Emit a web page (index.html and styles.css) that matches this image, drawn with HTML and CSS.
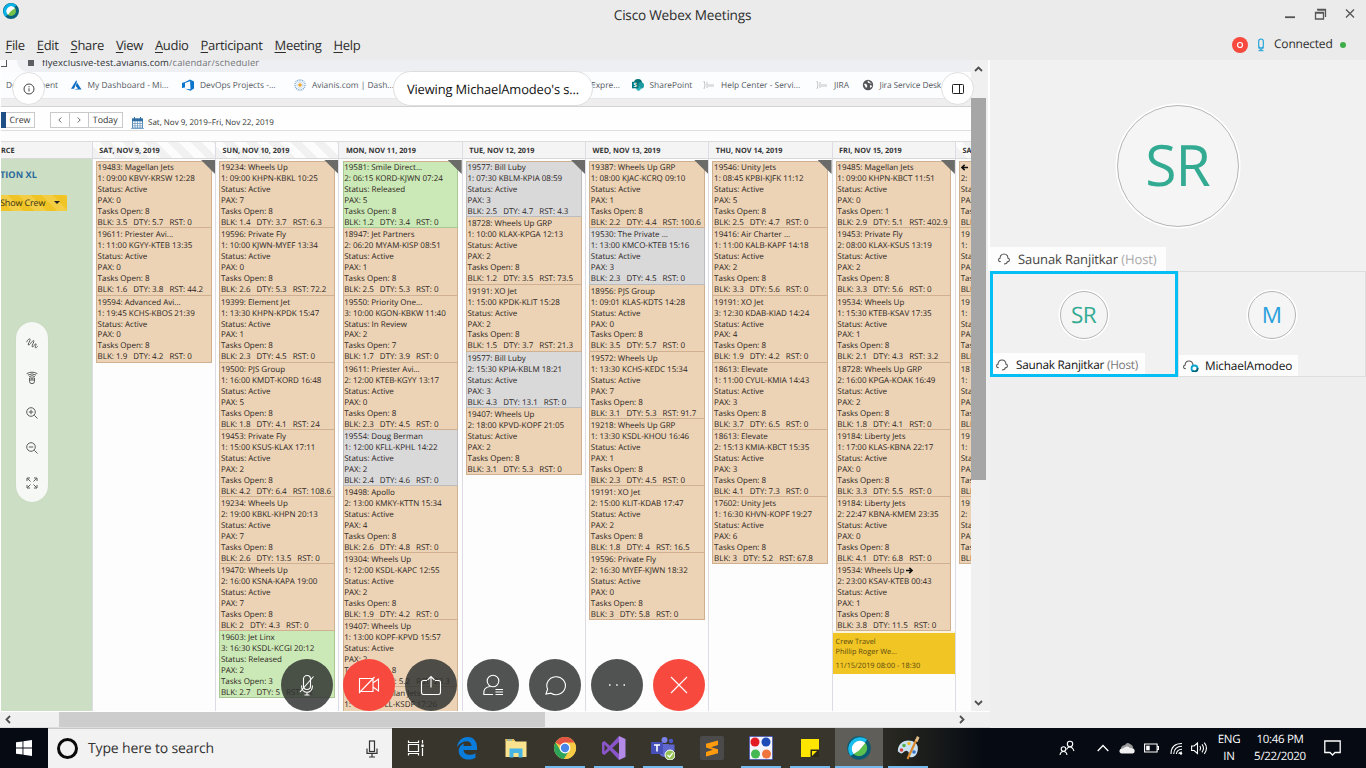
FILE: index.html
```html
<!DOCTYPE html>
<html lang="en">
<head>
<meta charset="utf-8">
<title>Cisco Webex Meetings</title>
<link rel="stylesheet" href="styles.css">
</head>
<body>
<div class="app">
  <header class="titlebar">
    <svg class="brand" viewBox="0 0 16 16"><circle cx="8" cy="8" r="6.4" fill="#fff"/><path d="M8 8 13 4.500A6.200 6.200 0 0 1 4 13z" fill="#73c04b"/><circle cx="8" cy="8" r="6.500" fill="none" stroke="#07627f" stroke-width="3"/><path d="M3.500 12.700A6.500 6.500 0 0 1 12.300 3.200" fill="none" stroke="#07b5ea" stroke-width="3"/></svg>
    <div class="title">Cisco Webex Meetings</div>
    <nav class="menu"><span><u>F</u>ile</span><span><u>E</u>dit</span><span><u>S</u>hare</span><span><u>V</u>iew</span><span><u>A</u>udio</span><span><u>P</u>articipant</span><span><u>M</u>eeting</span><span><u>H</u>elp</span></nav>
    <svg class="winctl" viewBox="0 0 76 16"><g fill="none" stroke="#555" stroke-width="1.300"><path d="M0 12.200h10" stroke-width="1.800"/><path d="M30.500 7.500h8v6.500h-8zM30 8h9M32.500 5h8v7M32 4.500h9" /><path d="M61 4.500l8 8M69 4.500l-8 8"/></g></svg>
    <div class="status">
      <svg width="16" height="16" viewBox="0 0 16 16"><circle cx="8" cy="8" r="8" fill="#f8493f"/><circle cx="8" cy="8" r="2.500" fill="none" stroke="#fff" stroke-width="1.200"/></svg>
      <svg width="8" height="14" viewBox="0 0 8 14"><rect x="1.700" y="1" width="4.600" height="9" rx="2.300" fill="none" stroke="#1ba0d8" stroke-width="1.100"/><path d="M1 9.500q3 3.200 6 0M4 11v2M1.500 12.700h5" fill="none" stroke="#1ba0d8"/></svg>
      <span>Connected</span><i class="dot"></i>
    </div>
  </header>

  <main class="main">
    <section class="share">
      <div class="screen">
        <div class="urlbar"><span class="reload"></span><div class="urlfield"><i class="lock"></i><span class="url">flyexclusive-test.avianis.com<em>/calendar/scheduler</em></span></div></div>
        <div class="bookmarks">
          <span class="bm b0">Development</span>
          <span class="bm b1"><svg viewBox="0 0 12 11"><path d="M6.300.8 1 9.300h3L7 2zM7 3l-1.300 3.500L8 9 4 10h7.500z" fill="#0c6cc4"/></svg>My Dashboard - Mi...</span>
          <span class="bm b2"><svg viewBox="0 0 12 12"><path d="M0 4 3 3 8 .5v1.700L3 4v4.500L0 9zM8 .5l4 2v7L8.500 11.700 3 9.700l5.500.5z" fill="#0c76cf"/></svg>DevOps Projects -...</span>
          <span class="bm b3"><svg viewBox="0 0 12 12"><circle cx="6" cy="6" r="5" fill="none" stroke="#7da8cf" stroke-width="1.500" stroke-dasharray="1 .8"/><circle cx="6" cy="6" r="3" fill="none" stroke="#8fb9dc" stroke-dasharray=".8 .8"/><circle cx="6" cy="6" r="1.800" fill="#eda52c"/></svg>Avianis.com | Dash...</span>
          <span class="bm b4">Expre...</span>
          <span class="bm b5"><svg viewBox="0 0 12 12"><circle cx="6" cy="4" r="4" fill="#067277"/><circle cx="8.700" cy="6.500" r="3.300" fill="#1a9ba1"/><circle cx="6.500" cy="9.500" r="2.300" fill="#2fb5bd"/><rect y="2.800" width="6.500" height="6.500" fill="#03787c"/><text x="1.500" y="8.200" font-size="6" font-weight="700" fill="#fff" font-family="Open Sans">S</text></svg>SharePoint</span>
          <span class="bm b6"><svg viewBox="0 0 12 12"><path d="M1 2q2 4 0 8M4 3v6M6 5v3M8 5v3M10 5v3" stroke="#c3c3c3" fill="none"/></svg>Help Center - Servi...</span>
          <span class="bm b7"><svg viewBox="0 0 12 12"><path d="M1 2q2 4 0 8M4 3v6M6 5v3M8 5v3M10 5v3" stroke="#c3c3c3" fill="none"/></svg>JIRA</span>
          <span class="bm b8"><svg viewBox="0 0 12 12"><circle cx="6" cy="6" r="5.200" fill="#55585b"/><path d="M2 5q2-1 3 1t-1 3M6 1.500q-1 2 1 2.500t3 1M8 6l2.500 1L8 9z" fill="#fff"/></svg>Jira Service Desk</span>
        </div>
        <div class="strip"></div>
        <div class="tools"><span class="tab"></span><span class="btn crew">Crew</span><span class="btn prev"><svg viewBox="0 0 4 6"><path d="M3.300.5.8 3l2.500 2.500"/></svg></span><span class="btn next"><svg viewBox="0 0 4 6"><path d="M.7.5 3.200 3 .7 5.500"/></svg></span><span class="btn today">Today</span>
          <svg class="cal" viewBox="0 0 13 12"><path d="M1.500 2h10v9h-10z" fill="#fff" stroke="#5b8fba"/><path d="M1 1.500h11v2.800H1z" fill="#2f6ea5"/><path d="M3.500 0v3M9.500 0v3" stroke="#2f6ea5"/><path d="M1 6.500h11M1 8.800h11M4 4v7M6.500 4v7M9 4v7M0 11.500h13" stroke="#5b8fba" stroke-width=".7"/></svg>
          <span class="range">Sat, Nov 9, 2019–Fri, Nov 22, 2019</span></div>
        <div class="spacer"></div>
        <div class="board">
          <div class="resource"><div class="dayhead">RCE</div><div class="fleet"><b>TION XL</b><span class="showcrew">Show Crew<i></i></span></div></div>
          <div class="days" id="days"></div>
        </div>
        <div class="pill">Viewing MichaelAmodeo's s...</div>
        <div class="round info"><svg width="12" height="12" viewBox="0 0 12 12" fill="none" stroke="#444"><circle cx="6" cy="6" r="5"/><path d="M6 5.300v3.200M6 3.200v1.100"/></svg></div>
        <div class="sidepill">
          <svg viewBox="0 0 12 12"><path d="M.6 5.200C1.300 3 3.600 1 4.100 2.200 4.600 3.600 1.300 7.400 2.400 8 3.700 8.600 6.400 3 7.700 3.600 8.900 4.300 5 9.300 6.300 9.900 7.500 10.400 9 6.300 10 6.800 10.900 7.400 8.500 10 9.300 10.700 10 11.200 11 10.200 11.600 9.400"/></svg>
          <svg viewBox="0 0 12 12"><path d="M3.500 6h5v3.200a2.500 2.500 0 0 1-5 0zM3.500 8h5M6 6v2M3.200 4.600Q6 2.800 8.800 4.600M1.900 3.100Q6 .6 10.100 3.100M.6 1.700Q6-1.400 11.400 1.700"/></svg>
          <svg viewBox="0 0 12 12"><path d="M8.300 8.300 11.500 11.500M5 2.800v4.400M2.800 5h4.400"/><circle cx="5" cy="5" r="4.300"/></svg>
          <svg viewBox="0 0 12 12"><path d="M8.300 8.300 11.500 11.500M2.800 5h4.400"/><circle cx="5" cy="5" r="4.300"/></svg>
          <svg viewBox="0 0 12 12"><path d="M1 4V1h3M8 1h3v3M11 8v3H8M4 11H1V8M1.500 1.500l3 3M10.500 1.500l-3 3M10.500 10.500l-3-3M1.500 10.500l3-3"/></svg>
        </div>
        <div class="controls">
          <span class="ctl"><svg viewBox="0 0 24 24"><rect x="8.500" y="2.500" width="7" height="14" rx="3.500"/><path d="M6.500 12.500c0 9 11 9 11 0M12 19.500V22M9.500 22h5M5 19 18.500 3.500"/></svg></span>
          <span class="ctl red"><svg viewBox="0 0 24 24"><path d="M2.500 5.500h13.500v13H2.500zM16 10l5.500-4v12L16 14M2 20 17.500 4"/></svg></span>
          <span class="ctl"><svg viewBox="0 0 24 24"><path d="M8 7.500H4.500q-2 0-2 2V19q0 2.500 2 2.500h15q2 0 2-2.500V9.500q0-2-2-2H16M12 14.500V3.500M8.500 7 12 3.500 15.500 7"/></svg></span>
          <span class="ctl"><svg viewBox="0 0 24 24"><circle cx="12" cy="8" r="5.800"/><path d="M12 21.500H2.800q-1-7 6-8M14.500 16.500h7.500M14.500 19h7.500M14.500 21.500h7.500"/></svg></span>
          <span class="ctl"><svg viewBox="0 0 24 24"><path d="M3 21l1.600-4.700A9.300 9 0 1 1 8 20.200z"/></svg></span>
          <span class="ctl"><svg viewBox="0 0 24 24"><path d="M4 12h1.500M11.200 12h1.500M18.500 12H20" stroke-width="1.500"/></svg></span>
          <span class="ctl red"><svg viewBox="0 0 24 24"><path d="M4 4l16 16M20 4 4 20"/></svg></span>
        </div>
      </div>
      <div class="vscroll"><svg viewBox="0 0 9 6"><path d="M1 5l3.500-3.500L8 5"/></svg><i></i><svg class="end" viewBox="0 0 9 6"><path d="M1 1l3.500 3.500L8 1"/></svg></div>
      <div class="hscroll"><svg viewBox="0 0 6 9"><path d="M5 1 1.500 4.500 5 8"/></svg><i></i><svg class="end" viewBox="0 0 6 9"><path d="M1 1l3.500 3.500L1 8"/></svg></div>
      <div class="round layout"><svg width="12" height="10" viewBox="0 0 12 10" fill="none" stroke="#222"><rect x=".5" y=".5" width="11" height="9" rx=".8"/><path d="M7.500.5v9"/></svg></div>
    </section>
    <aside class="people">
      <div class="speaker"><div class="avatar big">SR</div><div class="name lg"><svg viewBox="0 0 12 12"><path d="M2.700 8.500Q.7 9 .6 7 .5 5.300 2 5.200 2.300 1 6 1T10 5.200q1.500.1 1.400 1.800-.1 2-2.100 1.500M9.300 8.500q0 2.500-3.300 2.500"/></svg><span>Saunak Ranjitkar <em>(Host)</em></span></div></div>
      <div class="thumbs">
        <div class="thumb active"><div class="avatar">SR</div><div class="name"><svg viewBox="0 0 12 12"><path d="M2.700 8.500Q.7 9 .6 7 .5 5.300 2 5.200 2.300 1 6 1T10 5.200q1.500.1 1.400 1.800-.1 2-2.100 1.500M9.300 8.500q0 2.500-3.300 2.500"/></svg><span>Saunak Ranjitkar <em>(Host)</em></span></div></div>
        <div class="thumb"><div class="avatar blue">M</div><div class="name"><svg class="wide" viewBox="0 0 16 12"><path d="M2.700 8.500Q.7 9 .6 7 .5 5.300 2 5.200 2.300 1 6 1T10 5.200"/><circle cx="11.500" cy="8.500" r="3" fill="#fff" style="stroke:#08a4cf;stroke-width:1.800"/><path d="M14.500 8a3 3 0 0 1-5 2.800" style="stroke:#0b6070;stroke-width:1.800"/></svg><span>MichaelAmodeo</span></div></div>
      </div>
    </aside>
  </main>

  <footer class="taskbar">
    <div class="start"><svg viewBox="0 0 16 16" fill="#fff"><path d="M0 2.300 6.500 1.400v6.100H0zM7.400 1.300 16 0v7.500H7.400zM0 8.400h6.500v6.200L0 13.700zM7.400 8.400H16V16l-8.600-1.300z"/></svg></div>
    <div class="search"><i></i><span>Type here to search</span><svg viewBox="0 0 12 18"><rect x="3.500" y="1" width="5" height="10.500"/><path d="M1 8.500v4.800h10V8.500M6 13.500V17M3 17h6"/></svg></div>
    <div class="tasks">
      <span class="task tv"><svg viewBox="0 0 24 24" fill="none" stroke="#fff" stroke-width="1.200"><path d="M4.500 4.500v2h10v-2M4.500 19.500v-2h10v2M4.500 8.500h10v7h-10zM18.500 4v3.500M18.500 12v8"/><path d="M17.300 8.500h2.400v2.500h-2.400z" fill="#fff" stroke="none"/></svg></span>
      <span class="task"><svg viewBox="0 0 24 24"><path d="M2 11C3 4.500 7.500 1 12.500 1 19 1 22 6 22 11v3H8.500c.5 5.500 7.500 6 12 3.200v4.500C13 26 3.500 22.500 3.700 14.500 4 10.500 7 8 9.500 7.200 8.700 8.300 8.500 9.300 8.500 10h8c0-6.500-9.500-6.500-14.500 1z" fill="#0a7cdb"/></svg></span>
      <span class="task"><svg viewBox="0 0 24 24"><path d="M1.500 3h8l2 2.500h11V21h-21z" fill="#fbe28f"/><path d="M1.500 3h8l1.500 2H1.500z" fill="#e9b94b"/><path d="M3 4h5" stroke="#58b7e8"/><path d="M5.500 21.500v-9h13v9h-4V17h-5v4.500z" fill="#46b5e6"/></svg></span>
      <span class="task on"><svg viewBox="0 0 24 24"><circle cx="12" cy="12" r="11" fill="#f6cb45"/><path d="M12 12 2.500 6.500A11 11 0 0 1 21.500 6.500H12z" fill="#e35445"/><path d="M2.500 6.500A11 11 0 0 0 11 23l5.200-8.500H7.500z" fill="#2ea35a"/><path d="M11 23l5.500-8.500L21.500 6.500A11 11 0 0 1 11 23z" fill="#f6cb45"/><circle cx="12" cy="12" r="5.400" fill="#fff"/><circle cx="12" cy="12" r="4.200" fill="#4a86e8"/></svg></span>
      <span class="task on"><svg viewBox="0 0 24 24"><path d="M0 6.500 2.500 5 17 18v6L2.500 8.500v7L17 0v6L2.500 19 0 17.500z" fill="#8a55c9"/><path d="M17 0l6.500 3v18L17 24z" fill="#b38ae6"/></svg></span>
      <span class="task on"><svg viewBox="0 0 24 24"><circle cx="13.500" cy="4" r="3" fill="#7b83eb"/><circle cx="20" cy="5" r="2.200" fill="#5059c9"/><path d="M9 8h9v9q-1 4-5 4-4-.5-4.500-4zM18 8.500h5.500v6q-1 3-5.500 3z" fill="#6068d0"/><rect y="6" width="12" height="12" fill="#4650b8"/><path d="M3 9h6M6 9v6.500" stroke="#fff" stroke-width="1.600"/><circle cx="19" cy="19" r="5" fill="#92c353" stroke="#fff"/><path d="M16.500 19l2 2 3.200-4" fill="none" stroke="#fff" stroke-width="1.300"/></svg></span>
      <span class="task"><svg viewBox="0 0 24 24"><rect width="24" height="24" rx="2" fill="#4a4a4a"/><path d="M18 4.500v4.500l-7 2.200 7 2v4L6 20.500V16l7-2.200-7-2.200V7.800z" fill="#ff9b0d"/></svg></span>
      <span class="task on"><svg viewBox="0 0 24 24"><rect width="24" height="24" fill="#f4f4fa"/><path d="M0 0h24v24H0z" fill="none" stroke="#26389c" stroke-width="1.500"/><circle cx="6" cy="6" r="4.500" fill="#e31b22"/><circle cx="17" cy="6" r="4.500" fill="#1f4bb8"/><circle cx="6.500" cy="18" r="4.500" fill="#45b853"/><circle cx="17.500" cy="18" r="4.500" fill="#f0753c"/></svg></span>
      <span class="task on"><svg viewBox="0 0 24 24"><path d="M3 3h18v18H3z" fill="#ffe600"/><path d="M12.500 21v-7.500H21V21z" fill="#2c2b1c"/><path d="M14 20v-5h5z" fill="#ffe600"/></svg></span>
      <span class="task on cur"><svg viewBox="0 0 24 24"><circle cx="12" cy="12" r="9.500" fill="#fff"/><path d="M12 14.500 19.500 5.500A10 10 0 0 1 5 19z" fill="#5cc04e"/><circle cx="12" cy="12" r="10" fill="none" stroke="#0b5a73" stroke-width="3.600"/><path d="M5 19A10 10 0 0 1 19 5" fill="none" stroke="#19bdee" stroke-width="3.600"/></svg></span>
      <span class="task on"><svg viewBox="0 0 24 24"><path d="M2 13C3 6 10 3 16 5s7 7 5 12-7 5-8 3 1-4-2-5-4 4-7 2-2-2-2-4z" fill="#c9e1f2"/><circle cx="5.500" cy="14" r="1.800" fill="#d84343"/><circle cx="8" cy="9.500" r="1.800" fill="#55ad4e"/><circle cx="13" cy="7.500" r="1.800" fill="#f0b92e"/><circle cx="18" cy="16" r="1.800" fill="#3572c8"/><path d="M20.500 3.500 11.500 23" stroke="#d9872e" stroke-width="2.200"/><path d="M19 4.500 21 0l2.500 1.500L21.500 6z" fill="#e3bd88"/></svg></span>
    </div>
    <div class="tray">
      <svg class="t1" viewBox="0 0 16 16"><circle cx="11" cy="4" r="2.700"/><circle cx="4.500" cy="9" r="2.300"/><path d="M7.500 9.500Q8.500 7 11 7t4 4M1 15q.5-3.500 3.500-3.500T8 15"/></svg>
      <svg class="t2" viewBox="0 0 12 8"><path d="M.7 7 6 1.500 11.300 7" stroke-width="1.300"/></svg>
      <svg class="t3" viewBox="0 0 16 12"><path d="M2 8a4 4 0 0 1 4-5Q8-.5 11 2q3 1 3 4z" fill="#999" stroke="none"/><path d="M3 11.500q-3-.5-2.500-3T4 6.500Q8 3 11 6q4.500-.5 4.700 3 0 2-2 2.500z" fill="#f0f0f0" stroke="none"/></svg>
      <svg class="t4" viewBox="0 0 15 10"><path d="M.6 1h12.500v8H.6zM13.500 3.500h1v3h-1"/><path d="M2.200 2.700h3.500v4.600H2.200z" fill="#fff" stroke="none"/></svg>
      <svg class="t5" viewBox="0 0 13 13"><path d="M1 12Q1 1.500 12 1.500M3.700 12Q4 4.500 12 4.300M6.400 12Q6.800 7.500 12 7.200M9 12q0-2 3-2"/><circle cx="11" cy="11.500" r="1.200" fill="#fff" stroke="none"/></svg>
      <svg class="t6" viewBox="0 0 17 14"><path d="M.6 5v4.500h2.500l3.400 3V2L3.100 5zM8.800 5q1.500 2 0 4.500M11 3.300q3 4 0 8M13.300 1.700q4.300 5.300 0 11.200"/></svg>
      <div class="stack lang"><span>ENG</span><span>IN</span></div>
      <div class="stack clock"><span>10:46 PM</span><span>5/22/2020</span></div>
      <svg class="t7" viewBox="0 0 17 16"><path d="M.8 1h15.400v11.500h-5.200L8.500 15 6 12.500H.8z" stroke-width="1.300"/></svg>
    </div>
  </footer>
</div>
<script src="schedule.js"></script>
</body>
</html>
```
FILE: styles.css
```css
* { box-sizing: border-box; }
body { margin: 0; font-family: "Open Sans", "Noto Sans", sans-serif; text-rendering: geometricPrecision; }
em { font-style: normal; }
.app { width: 1366px; height: 768px; overflow: hidden; display: flex; flex-direction: column; background: #eee; }

.titlebar { position: relative; height: 60px; flex: none; background: #ebebeb; color: #2d2d2d; display: flex; flex-direction: column; align-items: flex-start; }
.brand { position: absolute; left: 3px; top: 3px; width: 16px; height: 16px; }
.title { align-self: center; height: 33px; line-height: 30px; font-size: 13.6px; letter-spacing: -.2px; font-stretch: 95%; margin-right: 1px; }
.menu { display: flex; gap: 12px; padding-left: 5.500px; font-size: 13px; line-height: 25px; letter-spacing: -.33px; }
.menu u { text-underline-offset: 2px; }
.winctl { position: absolute; left: 1285px; top: 5px; width: 76px; height: 16px; }
.status { position: absolute; left: 1232px; top: 36px; height: 17px; display: flex; align-items: center; font-size: 12px; }
.status span { margin-left: 9px; line-height: 16px; margin-top: -1px; width: 59px; letter-spacing: -.2px; }
.status svg + svg { margin-left: 9px; }
.dot { width: 6px; height: 6px; border-radius: 50%; background: #3fae49; margin-left: 7px; }

.main { height: 668px; display: flex; flex: none; }
.share { position: relative; width: 990px; display: grid; grid-template-columns: 971px 19px; grid-template-rows: 651px 17px; background: #f0f0f0; }
.screen { position: relative; overflow: hidden; background: #fdfdfe; display: flex; flex-direction: column; border-left: 1px solid #fff; }
.urlbar { height: 12px; flex: none; background: #fbfbfd; display: flex; overflow: hidden; }
.reload { width: 6px; height: 7px; border: solid #555; border-width: 0 1.5px 1.5px 0; }
.urlfield { margin-left: 10px; flex: 1; background: #edeff3; border-radius: 0 0 0 12px; display: flex; }
.lock { width: 6px; height: 6px; margin-left: 11px; background: #5b5e62; }
.url { margin-left: 8px; line-height: 12px; margin-top: -3.500px; font-size: 9.500px; color: #333; letter-spacing: .08px; }
.url em { color: #777; }
.bookmarks { height: 26px; flex: none; background: #fcfdff; position: relative; }
.bm { position: absolute; top: 6px; height: 14px; display: flex; align-items: center; font-size: 8.4px; color: #555a60; white-space: nowrap; }
.bm svg { width: 12px; height: 12px; margin-right: 6px; }
.b0 { left: 5px; letter-spacing: -.05px; } .b1 { left: 68.500px; letter-spacing: .03px; } .b2 { left: 181px; } .b3 { left: 293px; } .b4 { left: 590px; } .b5 { left: 630.500px; } .b6 { left: 702px; } .b7 { left: 815px; } .b8 { left: 860.500px; letter-spacing: -.12px; }
.strip { height: 9px; flex: none; background: #eeeeef; border-top: 1px solid #e6e6e8; border-bottom: 1px solid #d3d3d5; }
.tools { height: 24px; flex: none; display: flex; padding-top: 4.500px; border-bottom: 1px solid #dedede; background: #fefefe; font-size: 8.800px; color: #333; }
.tab { width: 5px; height: 16px; background: #1f4f84; }
.btn { height: 16px; line-height: 14px; border: 1px solid #c9c9c9; text-align: center; background: #fff; }
.btn svg { width: 4px; height: 6px; fill: none; stroke: #555; stroke-width: .9; }
.crew { width: 29px; border-left: 0; }
.prev { width: 20px; margin-left: 14.500px; } .next { width: 19.500px; border-left: 0; } .today { width: 33.500px; border-left: 0; }
.cal { width: 13px; height: 12px; margin: 5.500px 4px 0 8.500px; }
.range { font-size: 8px; line-height: 22px; }
.spacer { height: 10px; flex: none; }
.board { flex: 1; display: flex; min-height: 0; }
.resource { width: 90.800px; flex: none; display: flex; flex-direction: column; }
.dayhead { height: 18px; flex: none; background: #f4f4f4; border-top: 1px solid #dcdcdc; border-bottom: 1px solid #d8d8d8; font-size: 7.300px; font-weight: 700; line-height: 18.500px; color: #333; padding-left: 6.500px; white-space: nowrap; overflow: hidden; }
.resource .dayhead { padding-left: 0; }
.fleet { flex: 1; background: #ccdec4; display: flex; flex-direction: column; align-items: flex-start; font-size: 9.200px; }
.fleet b { color: #2b6a9b; line-height: 13px; margin-top: 8.500px; margin-left: -1px; }
.showcrew { margin-top: 14px; height: 16px; width: 66px; line-height: 15px; display: flex; align-items: center; color: #3a3215; font-size: 9px; background: repeating-linear-gradient(45deg, #efc424 0 8px, #f3cd43 8px 16px); letter-spacing: -.15px; white-space: nowrap; text-indent: -1px; }
.showcrew i { margin-left: auto; margin-right: 7px; border: 3px solid transparent; border-top: 3.500px solid #222; border-bottom: 0; }
.days { display: flex; flex: none; }
.day { width: 123.300px; flex: none; border-left: 1px solid #dcdce2; display: flex; flex-direction: column; position: relative; }
.day.weekend .dayhead { background: repeating-linear-gradient(45deg, #f1f1f1 0 8px, #fcfcfc 8px 16px); }
.corner { position: absolute; right: 0; top: 19px; width: 14px; height: 14px; background: #6b6c69; clip-path: polygon(0 0, 100% 0, 100% 100%); }
.cards { padding: 2.300px 0 0 3.200px; width: 118.900px; font-size: 8px; line-height: 10.970px; color: #2b241d; }
.card { height: 67.150px; border: 1px solid #cfb090; border-top-width: 0; background: #ecd3b5; padding: 2px 0 0 .6px; white-space: nowrap; }
.card:first-child { box-shadow: inset 0 1px #cfb090; }
.card div { height: 10.970px; }
.card .stats { display: flex; gap: 6px; }
.card.short { height: 56.180px; }
.card.green { background: #cbe9b6; border-color: #a9c893; }
.card.gray { background: #d9d9da; border-color: #bcbcbe; }
.card svg { width: 7px; height: 7px; vertical-align: -1px; }
.travel { height: 43px; width: 123px; padding: 3.500px 0 0 3px; background: #f0c524; color: #5c4a10; font-size: 7.350px; line-height: 10.300px; border-top: 2px solid #fbf3dc; }
.travel p { margin: 3.600px 0 0; }

.pill { position: absolute; left: 392px; top: 11px; width: 200px; height: 35px; border-radius: 18px; background: #fff; border: 1px solid #dedede; line-height: 35px; text-align: center; font-size: 12.900px; color: #111; white-space: nowrap; letter-spacing: -.12px; }
.round { position: absolute; width: 33px; height: 33px; border-radius: 50%; background: #fff; border: 1px solid #dfdfdf; display: flex; align-items: center; justify-content: center; }
.info { left: 11px; top: 12px; }
.layout { left: 941px; top: 12px; }
.sidepill { position: absolute; left: 15px; top: 262px; width: 32px; height: 180px; border-radius: 16px; background: #f5f8f4; box-shadow: 0 0 1px #b5c5ae; display: flex; flex-direction: column; align-items: center; padding-top: 15px; gap: 22.900px; }
.sidepill svg { width: 12px; height: 12px; fill: none; stroke: #5b5e5b; stroke-width: 1; overflow: visible; }
.controls { position: absolute; left: 280px; top: 599px; display: flex; gap: 10px; }
.ctl { width: 52px; height: 52px; border-radius: 50%; background: rgba(48,50,49,.84); display: flex; align-items: center; justify-content: center; }
.ctl.red { background: #f8493f; }
.ctl svg { width: 24px; height: 24px; fill: none; stroke: #fff; stroke-width: 1.100; }
.vscroll { width: 15px; display: flex; flex-direction: column; align-items: center; padding-top: 6px; background: #f0f0f0; }
.vscroll svg { width: 9px; height: 6px; fill: none; stroke: #505050; stroke-width: 1.800; }
.vscroll i { width: 15px; height: 382px; margin-top: 26px; background: #a6a6a6; }
.vscroll .end { margin-top: auto; margin-bottom: 5px; }
.hscroll { grid-column: 1 / 3; display: flex; align-items: center; padding-left: 5px; border-top: 1px solid #fff; border-bottom: 1px solid #ddd; }
.hscroll svg { width: 6px; height: 9px; fill: none; stroke: #505050; stroke-width: 1.800; }
.hscroll i { width: 486px; height: 15px; margin-left: 48px; background: #cdcdcd; }
.hscroll .end { margin-left: auto; margin-right: 25px; }

.people { width: 376px; background: #eee; }
.speaker { height: 211px; background: #f1f1f1; position: relative; display: flex; justify-content: center; padding-top: 45px; box-shadow: -2px 0 #fff; }
.avatar { width: 48px; height: 48px; border-radius: 50%; border: 1px solid #b5b5b5; background: #f5f5f5; box-shadow: 0 0 0 1.500px #fff; color: #33ab93; font-size: 22.500px; line-height: 45px; text-align: center; letter-spacing: -.5px; margin-right: 1px; }
.avatar.big { width: 122px; height: 122px; font-size: 57px; line-height: 117px; letter-spacing: -1px; }
.avatar.blue { color: #2ba0dc; }
.name { position: absolute; left: 0; bottom: 0; background: #fdfdfd; height: 21px; width: 152px; display: flex; align-items: center; gap: 8px; padding: 2px 0 0 3px; font-size: 11.800px; color: #111; white-space: nowrap; letter-spacing: -.25px; }
.name em { color: #777; }
.name svg { width: 12px; height: 12px; flex: none; fill: none; stroke: #555; stroke-width: 1.100; }
.name svg.wide { width: 16px; }
.name.lg { width: 176px; height: 24px; font-size: 13px; color: #444; padding: 0 0 0 8px; gap: 8px; letter-spacing: -.1px; }
.name.lg em { color: #aaa; }
.thumbs { display: flex; height: 106px; }
.thumb { width: 188px; position: relative; background: #f1f1f1; border: 1px solid #dedede; display: flex; justify-content: center; padding-top: 18.500px; }
.thumb.active { border: 3px solid #05bff4; padding-top: 16.500px; }
.thumb:not(.active) .name { width: 119px; padding: 1px 0 0 4px; gap: 6px; letter-spacing: -.15px; }

.taskbar { height: 40px; flex: none; display: flex; background: linear-gradient(90deg, #38352d 0 62%, #24241f 66%, #060b13 72%); color: #fff; }
.start { width: 48px; background: #060a12; display: flex; align-items: center; justify-content: center; }
.start svg { width: 16px; height: 16px; }
.search { width: 344px; background: #f2f2f2; border-top: 1px solid #c8c8c8; display: flex; align-items: center; padding-left: 9px; color: #333; font-size: 14px; letter-spacing: -.15px; }
.search i { width: 21px; height: 21px; border-radius: 50%; border: 3px solid #0a0a0a; margin-right: 10px; }
.search svg { width: 12px; height: 18px; margin-left: auto; margin-right: 14px; fill: none; stroke: #333; stroke-width: 1.200; }
.tasks { display: flex; margin-left: 2px; }
.task { width: 40px; margin-right: 9px; height: 40px; display: flex; align-items: center; justify-content: center; }
.task.tv { width: 44px; margin-right: 9px; }
.task.on { border-bottom: 2px solid #76b9ed; padding-top: 2px; }
.task.cur { width: 48px; margin: 0 5px 0 -4px; background: #605e58; }
.task svg { width: 24px; height: 24px; }
.tray { margin-left: auto; display: flex; align-items: center; }
.tray svg { fill: none; stroke: #fff; stroke-width: 1.100; }
.t1 { width: 16px; height: 16px; margin-right: 22px; }
.t2 { width: 12px; height: 8px; margin-right: 10px; }
.t3 { width: 16px; height: 12px; margin-right: 9px; }
.t4 { width: 15px; height: 10px; margin-right: 11px; }
.t5 { width: 13px; height: 13px; margin-right: 8px; }
.t6 { width: 17px; height: 14px; margin-right: 9px; }
.t7 { width: 17px; height: 16px; margin-right: 25px; }
.stack { display: flex; flex-direction: column; text-align: center; font-size: 11.500px; line-height: 17px; letter-spacing: -.3px; }
.lang { width: 24px; margin-right: 12px; } .clock { width: 54px; margin-right: 17px; white-space: nowrap; }
```
FILE: schedule.js
```javascript
// trip|leg|status|pax|open tasks|block|duty|rest|tint
const week = [
  { head: "SAT, NOV 9, 2019", weekend: true, trips: [
    "19483: Magellan Jets|1: 09:00 KBVY-KRSW 12:28|Active|0|8|3.5|5.7|0",
    "19611: Priester Avi...|1: 11:00 KGYY-KTEB 13:35|Active|0|8|1.6|3.8|44.2",
    "19594: Advanced Avi...|1: 19:45 KCHS-KBOS 21:39|Active|0|8|1.9|4.2|0"] },
  { head: "SUN, NOV 10, 2019", weekend: true, trips: [
    "19234: Wheels Up|1: 09:00 KHPN-KBKL 10:25|Active|7|8|1.4|3.7|6.3",
    "19596: Private Fly|1: 10:00 KJWN-MYEF 13:34|Active|0|8|2.6|5.3|72.2",
    "19399: Element Jet|1: 13:30 KHPN-KPDK 15:47|Active|1|8|2.3|4.5|0",
    "19500: PJS Group|1: 16:00 KMDT-KORD 16:48|Active|5|8|1.8|4.1|24",
    "19453: Private Fly|1: 15:00 KSUS-KLAX 17:11|Active|2|8|4.2|6.4|108.6",
    "19234: Wheels Up|2: 19:00 KBKL-KHPN 20:13|Active|7|8|2.6|13.5|0",
    "19470: Wheels Up|2: 16:00 KSNA-KAPA 19:00|Active|7|8|2|4.3|0",
    "19603: Jet Linx|3: 16:30 KSDL-KCGI 20:12|Released|2|3|2.7|5|12|green"] },
  { head: "MON, NOV 11, 2019", trips: [
    "19581: Smile Direct...|2: 06:15 KORD-KJWN 07:24|Released|5|8|1.2|3.4|0|green",
    "18947: Jet Partners|2: 06:20 MYAM-KISP 08:51|Active|1|8|2.5|5.3|0",
    "19550: Priority One...|3: 10:00 KGON-KBKW 11:40|In Review|2|7|1.7|3.9|0",
    "19611: Priester Avi...|2: 12:00 KTEB-KGYY 13:17|Active|0|8|2.3|4.5|0",
    "19554: Doug Berman|1: 12:00 KFLL-KPHL 14:22|Active|2||2.4|4.6|0|gray",
    "19498: Apollo|2: 13:00 KMKY-KTTN 15:34|Active|4|8|2.6|4.8|0",
    "19304: Wheels Up|1: 12:00 KSDL-KAPC 12:55|Active|2|8|1.9|4.2|0",
    "19407: Wheels Up|1: 13:00 KOPF-KPVD 15:57|Active|2|8|2.9|5.2|23.3",
    "19483: Magellan Jets|1: 15:00 KFLL-KSDF 17:26|Active|0|8|2.4|4.6|0"] },
  { head: "TUE, NOV 12, 2019", trips: [
    "19577: Bill Luby|1: 07:30 KBLM-KPIA 08:59|Active|3||2.5|4.7|4.3|gray",
    "18728: Wheels Up GRP|1: 10:00 KLAX-KPGA 12:13|Active|2|8|1.2|3.5|73.5",
    "19191: XO Jet|1: 15:00 KPDK-KLIT 15:28|Active|2|8|1.5|3.7|21.3",
    "19577: Bill Luby|2: 15:30 KPIA-KBLM 18:21|Active|3||4.3|13.1|0|gray",
    "19407: Wheels Up|2: 18:00 KPVD-KOPF 21:05|Active|2|8|3.1|5.3|0"] },
  { head: "WED, NOV 13, 2019", trips: [
    "19387: Wheels Up GRP|1: 08:00 KJAC-KCRQ 09:10|Active|1|8|2.2|4.4|100.6",
    "19530: The Private ...|1: 13:00 KMCO-KTEB 15:16|Active|3||2.3|4.5|0|gray",
    "18956: PJS Group|1: 09:01 KLAS-KDTS 14:28|Active|0|8|3.5|5.7|0",
    "19572: Wheels Up|1: 13:30 KCHS-KEDC 15:34|Active|7|8|3.1|5.3|91.7",
    "19218: Wheels Up GRP|1: 13:30 KSDL-KHOU 16:46|Active|1|8|2.3|4.5|0",
    "19191: XO Jet|2: 15:00 KLIT-KDAB 17:47|Active|2|8|1.8|4|16.5",
    "19596: Private Fly|2: 16:30 MYEF-KJWN 18:32|Active|0|8|3|5.8|0"] },
  { head: "THU, NOV 14, 2019", trips: [
    "19546: Unity Jets|1: 08:45 KPBI-KJFK 11:12|Active|5|8|2.5|4.7|0",
    "19416: Air Charter ...|1: 11:00 KALB-KAPF 14:18|Active|2|8|3.3|5.6|0",
    "19191: XO Jet|3: 12:30 KDAB-KIAD 14:24|Active|4|8|1.9|4.2|0",
    "18613: Elevate|1: 11:00 CYUL-KMIA 14:43|Active|3|8|3.7|6.5|0",
    "18613: Elevate|2: 15:13 KMIA-KBCT 15:35|Active|3|8|4.1|7.3|0",
    "17602: Unity Jets|1: 16:30 KHVN-KOPF 19:27|Active|6|8|3|5.2|67.8"] },
  { head: "FRI, NOV 15, 2019", travel: true, trips: [
    "19485: Magellan Jets|1: 09:00 KHPN-KBCT 11:51|Active|0|1|2.9|5.1|402.9",
    "19453: Private Fly|2: 08:00 KLAX-KSUS 13:19|Active|2|8|3.3|5.6|0",
    "19534: Wheels Up|1: 15:30 KTEB-KSAV 17:35|Active|1|8|2.1|4.3|3.2",
    "18728: Wheels Up GRP|2: 16:00 KPGA-KOAK 16:49|Active|2|8|1.8|4.1|0",
    "19184: Liberty Jets|1: 17:00 KLAS-KBNA 22:17|Active|0|8|3.3|5.5|0",
    "19184: Liberty Jets|2: 22:47 KBNA-KMEM 23:35|Active|0|8|4.1|6.8|0",
    "19534: Wheels Up >|2: 23:00 KSAV-KTEB 00:43|Active|1|8|3.8|11.5|0"] },
  { head: "SAT, NOV 16, 2019", weekend: true, trips: [
    "<|2:|Active|0|8|2|4|0", "19|1:|Active|0|8|2|4|0", "19|1:|Active|0|8|2|4|0",
    "18|1:|Active|0|8|2|4|0", "19|1:|Active|0|8|2|4|0", "19|2:|Active|0|8|2|4|0"] }
];
const right = '<svg viewBox="0 0 8 8"><path d="M0 4h6.500M3.800 1 7 4 3.800 7" fill="none" stroke="#111" stroke-width="1.700"/></svg>';
const left = '<svg viewBox="0 0 8 8"><path d="M8 4H1.500M4.200 1 1 4l3.200 3" fill="none" stroke="#111" stroke-width="1.700"/></svg>';

function card(row) {
  const [trip, leg, status, pax, open, blk, dty, rst, tint] = row.split("|");
  const name = trip.replace(">", right).replace(/^<$/, left);
  return `<div class="card ${tint || ""} ${open ? "" : "short"}"><div>${name}</div><div>${leg}</div><div>Status: ${status}</div><div>PAX: ${pax}</div>` +
    (open ? `<div>Tasks Open: ${open}</div>` : "") +
    `<div class="stats"><span>BLK: ${blk}</span><span>DTY: ${dty}</span><span>RST: ${rst}</span></div></div>`;
}

document.getElementById("days").innerHTML = week.map(d =>
  `<div class="day${d.weekend ? " weekend" : ""}"><div class="dayhead">${d.head}</div>` +
  `<div class="cards">${d.trips.map(card).join("")}</div>` +
  (d.travel ? '<div class="travel">Crew Travel<br>Phillip Roger We...<p>11/15/2019 08:00 - 18:30</p></div>' : "") +
  '<i class="corner"></i></div>').join("");
```
